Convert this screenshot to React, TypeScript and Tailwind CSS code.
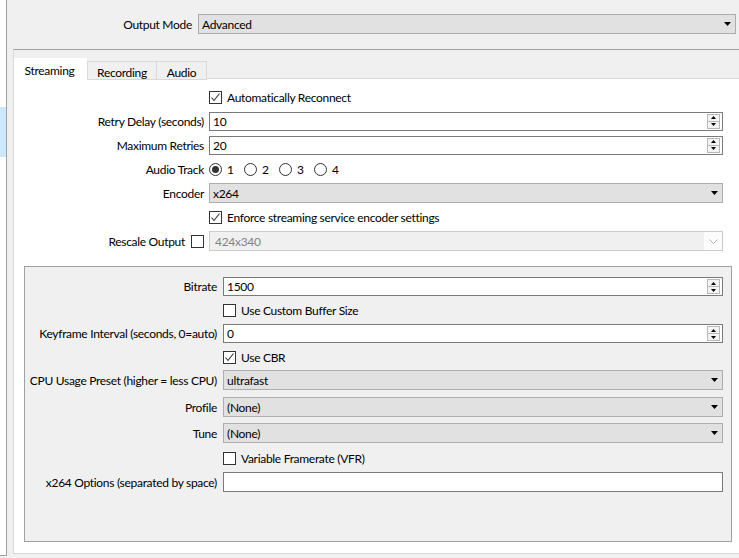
import type { ReactNode } from "react";

const font = { fontFamily: 'Lato, "Liberation Sans", sans-serif', letterSpacing: "-0.3px" };

function Arrow() {
  return (
    <svg width="7" height="4" viewBox="0 0 7 4" className="shrink-0">
      <path d="M0 0h7L3.5 4z" fill="#000" />
    </svg>
  );
}

function Combo({ value, width }: { value: string; width: string }) {
  return (
    <div
      className={`flex h-[20px] ${width} items-center justify-between border border-[#adadad] bg-[#e1e1e1] pl-[3px] pr-[4px]`}
    >
      <span className="pt-px">{value}</span>
      <Arrow />
    </div>
  );
}

function DisabledCombo({ value }: { value: string }) {
  return (
    <div className="flex h-[20px] w-[514px] border border-[#cccccc] bg-[#fcfcfc]">
      <div className="flex flex-1 items-center bg-[#f0f0f0] pt-px pl-[5px] text-[#838383]">{value}</div>
      <div className="flex w-[18px] items-center justify-center">
        <svg width="9" height="5" viewBox="0 0 9 5">
          <path d="M0.5 0.5l4 4 4-4" fill="none" stroke="#b5b5b5" strokeWidth="1" />
        </svg>
      </div>
    </div>
  );
}

function Spin({ value, width }: { value: string; width: string }) {
  return (
    <div className={`flex h-[19px] ${width} items-center border border-[#7a7a7a] bg-white pl-[3px] pr-[2px]`}>
      <span className="flex-1 pt-px">{value}</span>
      <div className="flex h-[15px] w-[13px] flex-col border border-[#b8b8b8] bg-[#f4f4f4]">
        <div className="flex flex-1 items-center justify-center border-b border-[#b8b8b8]">
          <svg width="5" height="3" viewBox="0 0 5 3">
            <path d="M0 3h5L2.5 0z" fill="#000" />
          </svg>
        </div>
        <div className="flex flex-1 items-center justify-center">
          <svg width="5" height="3" viewBox="0 0 5 3">
            <path d="M0 0h5L2.5 3z" fill="#000" />
          </svg>
        </div>
      </div>
    </div>
  );
}

function TextBox({ width }: { width: string }) {
  return <div className={`h-[20px] ${width} border border-[#7a7a7a] bg-white`} />;
}

function Check({ checked }: { checked?: boolean }) {
  return (
    <div className="flex h-[13px] w-[13px] shrink-0 items-center justify-center border border-[#333333] bg-white">
      {checked ? (
        <svg width="11" height="11" viewBox="0 0 11 11">
          <path d="M1.5 5.5l2.5 3 5.5-7" fill="none" stroke="#333" strokeWidth="1.1" />
        </svg>
      ) : null}
    </div>
  );
}

function CheckRow({ label, checked }: { label: string; checked?: boolean }) {
  return (
    <div className="flex items-center gap-[5px] whitespace-nowrap">
      <Check checked={checked} />
      <span className="pt-px">{label}</span>
    </div>
  );
}

function Radio({ label, checked }: { label: string; checked?: boolean }) {
  return (
    <div className="flex w-[35px] items-center gap-[5px]">
      <div className="flex h-[13px] w-[13px] items-center justify-center rounded-full border border-[#333333] bg-white">
        {checked ? <div className="h-[7px] w-[7px] rounded-full bg-[#333333]" /> : null}
      </div>
      <span className="pt-px">{label}</span>
    </div>
  );
}

function Row({ label, children }: { label?: ReactNode; children: ReactNode }) {
  return (
    <div className="flex h-[20px] items-center gap-[5px]">
      <div className="flex w-[190px] justify-end whitespace-nowrap pt-px">{label}</div>
      {children}
    </div>
  );
}

function GroupRow({ label, children, cls }: { label?: string; children: ReactNode; cls: string }) {
  return (
    <div className={`flex items-center gap-[6px] ${cls}`}>
      <div className="w-[192px] whitespace-nowrap pt-px text-right">{label}</div>
      {children}
    </div>
  );
}

export default function App() {
  return (
    <div className="flex h-[558px] w-[739px] overflow-hidden bg-[#f0f0f0] text-[12px] text-black" style={font}>
      <div className="relative h-[556px] w-[7px] shrink-0 border-r border-b border-[#a0a0a0] bg-white">
        <div className="absolute top-[107px] left-0 h-[50px] w-[6px] bg-[#cce8ff]" />
      </div>

      <div className="flex min-w-0 flex-1 flex-col">
        <div className="mt-[14px] flex h-[20px] items-center gap-[6px]">
          <div className="w-[185px] pt-px text-right">Output Mode</div>
          <Combo value="Advanced" width="w-[538px]" />
        </div>

        <div className="mt-[15px] ml-[6px] flex w-[740px] flex-col border-t border-l border-t-[#a0a0a0] border-l-[#d9d9d9] pt-[8px]">
          <div className="relative z-10 flex h-[21px] items-end">
            <div className="flex h-[21px] w-[73px] items-start justify-center bg-white pt-[4px] pr-[2px]">Streaming</div>
            <div className="-mb-px flex h-[19px] w-[70px] items-start justify-center border border-[#d9d9d9] bg-[#f0f0f0] pt-[2px]">
              Recording
            </div>
            <div className="-mb-px flex h-[19px] w-[50px] items-start justify-center border border-l-0 border-[#d9d9d9] bg-[#f0f0f0] pt-[2px]">
              Audio
            </div>
          </div>

          <div className="-mt-px h-[476px] border-t border-b border-[#d9d9d9] bg-white pt-[8px]">
            <div className="flex flex-col gap-[4px]">
              <Row>
                <CheckRow label="Automatically Reconnect" checked />
              </Row>
              <Row label="Retry Delay (seconds)">
                <Spin value="10" width="w-[514px]" />
              </Row>
              <Row label="Maximum Retries">
                <Spin value="20" width="w-[514px]" />
              </Row>
              <Row label="Audio Track">
                <div className="flex">
                  <Radio label="1" checked />
                  <Radio label="2" />
                  <Radio label="3" />
                  <Radio label="4" />
                </div>
              </Row>
              <Row label="Encoder">
                <Combo value="x264" width="w-[514px]" />
              </Row>
              <Row>
                <CheckRow label="Enforce streaming service encoder settings" checked />
              </Row>
              <Row
                label={
                  <div className="flex items-center gap-[6px]">
                    <span>Rescale Output</span>
                    <Check />
                  </div>
                }
              >
                <DisabledCombo value="424x340" />
              </Row>
            </div>

            <div className="mt-[15px] ml-[10px] h-[276px] w-[708px] border border-[#a0a0a0] bg-[#f0f0f0] pt-[10px]">
              <GroupRow label="Bitrate" cls="h-[19px]">
                <Spin value="1500" width="w-[500px]" />
              </GroupRow>
              <GroupRow cls="mt-[4px] h-[20px]">
                <CheckRow label="Use Custom Buffer Size" />
              </GroupRow>
              <GroupRow label="Keyframe Interval (seconds, 0=auto)" cls="mt-[4px] h-[19px]">
                <Spin value="0" width="w-[500px]" />
              </GroupRow>
              <GroupRow cls="mt-[4px] h-[20px]">
                <CheckRow label="Use CBR" checked />
              </GroupRow>
              <GroupRow label="CPU Usage Preset (higher = less CPU)" cls="mt-[3px] h-[20px]">
                <Combo value="ultrafast" width="w-[500px]" />
              </GroupRow>
              <GroupRow label="Profile" cls="mt-[7px] h-[20px]">
                <Combo value="(None)" width="w-[500px]" />
              </GroupRow>
              <GroupRow label="Tune" cls="mt-[6px] h-[20px]">
                <Combo value="(None)" width="w-[500px]" />
              </GroupRow>
              <GroupRow cls="mt-[5px] h-[20px]">
                <CheckRow label="Variable Framerate (VFR)" />
              </GroupRow>
              <GroupRow label="x264 Options (separated by space)" cls="mt-[4px] h-[20px]">
                <TextBox width="w-[500px]" />
              </GroupRow>
            </div>
          </div>
        </div>
      </div>
    </div>
  );
}
